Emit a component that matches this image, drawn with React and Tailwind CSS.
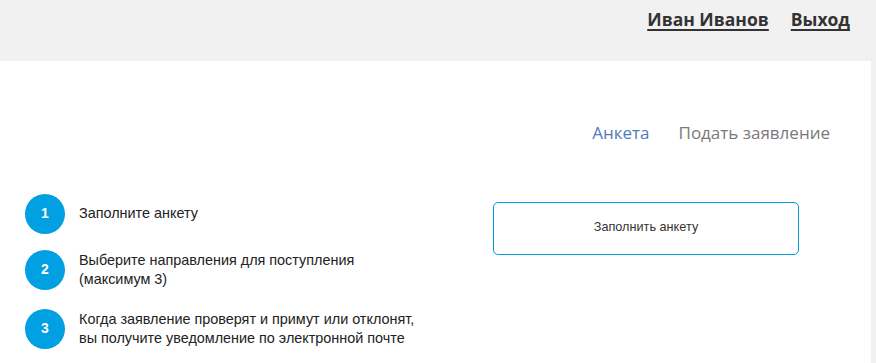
export default function App() {
  const steps = [
    ["1", "Заполните анкету", ""],
    ["2", "Выберите направления для поступления\n(максимум 3)", "mt-[16px]"],
    ["3", "Когда заявление проверят и примут или отклонят,\nвы получите уведомление по электронной почте", "mt-[19px]"],
  ];

  return (
    <div className="min-h-[363px] bg-[#f1f1f1]">
      <header className="h-[61px] flex justify-end items-start pt-[6px] pr-[26px] gap-[22px] font-['Open_Sans',sans-serif] text-[17.5px] font-bold text-[#333]">
        <a href="#" className="underline underline-offset-[3px] decoration-2">Иван Иванов</a>
        <a href="#" className="underline underline-offset-[3px] decoration-2">Выход</a>
      </header>

      <main className="bg-white mr-[5px] min-h-[302px]">
        <nav className="flex justify-end gap-[29px] pt-[59px] pr-[41px] font-['Open_Sans',sans-serif] text-[17px]">
          <a href="#" className="text-[#4f7cbc]">Анкета</a>
          <a href="#" className="text-[#7a7a7a]">Подать заявление</a>
        </nav>

        <div className="flex pt-[48px] pl-[25px] font-['Liberation_Sans',Arial,sans-serif]">
          <ol className="w-[468px] flex flex-col">
            {steps.map(([n, text, mt]) => (
              <li key={n} className={`flex items-center gap-[14px] ${mt}`}>
                <span className="w-[40px] h-[40px] rounded-full bg-[#00a0e3] text-white text-[14px] font-bold flex items-center justify-center shrink-0">
                  {n}
                </span>
                <span className="text-[14.4px] leading-[19px] text-[#222] whitespace-pre-line">{text}</span>
              </li>
            ))}
          </ol>
          <div className="pt-[8px]">
            <button className="w-[306px] h-[53px] border border-[#00a0e3] rounded-[5px] text-[12.7px] text-[#333] bg-white">
              Заполнить анкету
            </button>
          </div>
        </div>
      </main>
    </div>
  );
}
